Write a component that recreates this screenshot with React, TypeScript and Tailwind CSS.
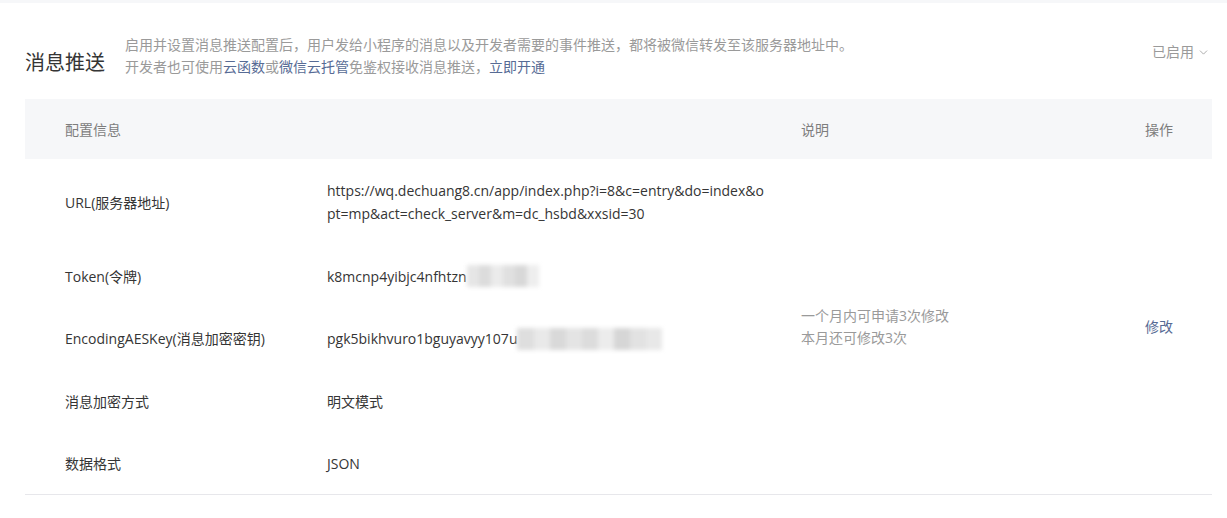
import { ChevronDown } from 'lucide-react'

const font = { fontFamily: '"Open Sans", "Noto Sans CJK SC", sans-serif' }

type Row = { label: string; value: React.ReactNode }

function Blurred({ width, shades }: { width: number; shades: string[] }) {
  return (
    <span className="relative inline-block h-[22px] align-middle" style={{ width }}>
      <span className="absolute inset-0 flex overflow-hidden blur-[2px]">
        {shades.map((s, i) => (
          <span key={i} className="h-full flex-1" style={{ backgroundColor: s }} />
        ))}
      </span>
    </span>
  )
}

const rows: Row[] = [
  {
    label: 'URL(服务器地址)',
    value: (
      <>
        https://wq.dechuang8.cn/app/index.php?i=8&amp;c=entry&amp;do=index&amp;o
        <br />
        pt=mp&amp;act=check_server&amp;m=dc_hsbd&amp;xxsid=30
      </>
    ),
  },
  {
    label: 'Token(令牌)',
    value: (
      <span className="flex items-center">
        k8mcnp4yibjc4nfhtzn
        <Blurred width={72} shades={['#e6e6e6', '#dcdcdc', '#ebebeb', '#e0e0e0', '#d8d8d8', '#eeeeee']} />
      </span>
    ),
  },
  {
    label: 'EncodingAESKey(消息加密密钥)',
    value: (
      <span className="flex items-center">
        pgk5bikhvuro1bguyavyy107u
        <Blurred
          width={145}
          shades={['#dedede', '#e9e9e9', '#d9d9d9', '#e4e4e4', '#dcdcdc', '#ececec', '#d6d6d6', '#e2e2e2', '#e8e8e8']}
        />
      </span>
    ),
  },
  { label: '消息加密方式', value: '明文模式' },
  { label: '数据格式', value: 'JSON' },
]

export default function App() {
  return (
    <div className="min-h-[518px] w-[1227px] bg-white text-[14px] text-[#353535]" style={font}>
      <div className="h-[3px] bg-[#f6f7f9]" />
      <div className="pl-[25px] pr-[15px]">
        <div className="flex items-start justify-between pt-[31px]">
          <div className="flex items-end">
            <h2 className="mb-[1px] w-[100px] text-[20px] font-normal leading-[28px] text-[#353535]">消息推送</h2>
            <div className="text-[14px] leading-[22px] text-[#9a9a9a]">
              <p>启用并设置消息推送配置后，用户发给小程序的消息以及开发者需要的事件推送，都将被微信转发至该服务器地址中。</p>
              <p>
                开发者也可使用<span className="text-[#576b95]">云函数</span>或
                <span className="text-[#576b95]">微信云托管</span>免鉴权接收消息推送，
                <span className="text-[#576b95]">立即开通</span>
              </p>
            </div>
          </div>
          <div className="mt-[7px] flex items-center gap-[3px] pr-[2px] text-[14px] leading-[22px] text-[#9a9a9a]">
            已启用
            <ChevronDown size={13} strokeWidth={1.5} />
          </div>
        </div>

        <div className="mt-[21px]">
          <div className="grid h-[60px] grid-cols-[302px_474px_344px_1fr] items-center bg-[#f6f7f9] text-[#7d7d7d]">
            <div className="pl-[40px]">配置信息</div>
            <div />
            <div>说明</div>
            <div>操作</div>
          </div>
          <div className="grid grid-cols-[302px_474px_344px_1fr] grid-rows-[86px_62px_63px_62px_62px] border-b border-[#e7e7eb] leading-[23px]">
            {rows.map((r, i) => (
              <div key={r.label} className="contents">
                <div className="flex items-center pl-[40px]" style={{ gridRow: i + 1, gridColumn: 1 }}>
                  {r.label}
                </div>
                <div className="flex items-center" style={{ gridRow: i + 1, gridColumn: 2 }}>
                  <div>{r.value}</div>
                </div>
              </div>
            ))}
            <div className="col-start-3 row-span-5 row-start-1 flex flex-col justify-center text-[14px] leading-[22px] text-[#9a9a9a]">
              <p>一个月内可申请3次修改</p>
              <p>本月还可修改3次</p>
            </div>
            <div className="col-start-4 row-span-5 row-start-1 flex items-center text-[#576b95]">修改</div>
          </div>
        </div>
      </div>
    </div>
  )
}
